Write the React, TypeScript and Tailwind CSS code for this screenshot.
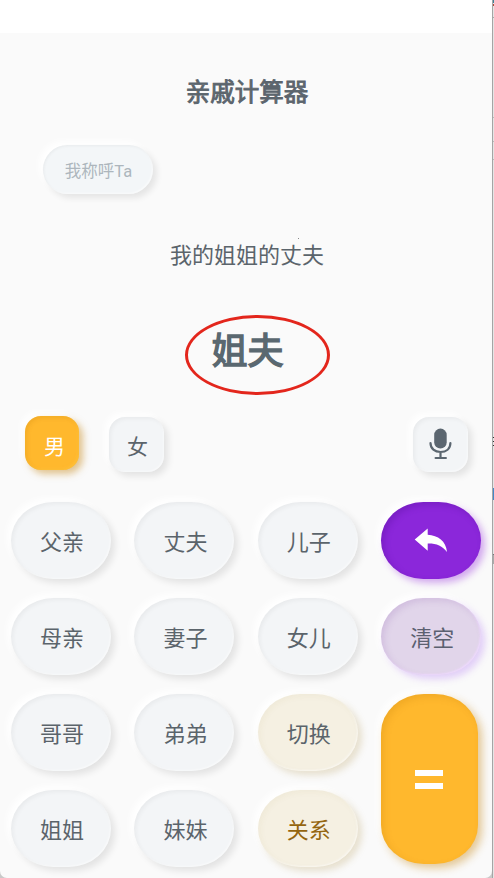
import type { ReactNode } from "react";

const soft = "bg-[#f3f5f7] text-[#5b646b] shadow-[4px_4px_7px_#00000018,-4px_-4px_7px_#ffffff,inset_2px_2px_4px_#0000000b,inset_-1px_-1px_2px_#ffffff80]";
const cream = "bg-[#f5f0e2] shadow-[4px_4px_7px_#a5843038,-4px_-4px_7px_#ffffff,inset_2px_2px_6px_#8070300d,inset_-1px_-1px_2px_#ffffff90]";

function Key({ children, tone = soft }: { children: ReactNode; tone?: string }) {
  return (
    <button className={`flex h-[77px] w-[100px] items-center justify-center rounded-[43px/39px] pb-[2px] pl-[2px] text-[22px] leading-[30px] ${tone}`}>
      {children}
    </button>
  );
}

export default function App() {
  return (
    <div className="flex h-[878px] w-[494px] overflow-hidden bg-[#c9c9c9] font-['Noto_Sans_CJK_SC',sans-serif] text-[#5b646b]">
      <main className="relative flex h-[878px] w-[492px] shrink-0 flex-col overflow-hidden rounded-b-[7px] bg-[#fafafa]">
        <div className="h-[33px] shrink-0 bg-white" />
        <h1 className="mt-[39px] pl-[2px] text-center text-[24.5px] leading-[38px] text-[#5c656d] [-webkit-text-stroke:0.9px_#5c656d]">亲戚计算器</h1>
        <div className="mt-[35px] ml-[43px] flex h-[49px] w-[110px] shrink-0 items-center justify-center rounded-[25px] bg-[#f3f6f8] pt-[4px] pl-px text-[16.5px] text-[#adb6bd] shadow-[4px_4px_6px_#00000016,-4px_-4px_7px_#ffffff,inset_1px_1px_3px_#0000000c,inset_-1px_-1px_2px_#ffffffa0]">
          <span>我称呼<span className="font-[Roboto]">Ta</span></span>
        </div>
        <p className="relative mt-[43px] pl-[2px] text-center text-[22px] leading-[32px]">
          我的姐姐的丈夫
          <i className="absolute top-px left-[298px] size-px bg-[#888]" />
        </p>
        <div className="mt-[46px] ml-[185px] flex h-[80px] w-[145px] shrink-0 items-center rounded-[50%] border-[3px] border-[#e3261c] pl-[23.5px] pb-[15px] text-[36px] leading-[50px] text-[#5a6870] [-webkit-text-stroke:1.5px_#5a6870]">姐夫</div>
        <div className="mt-[21px] flex h-[56px] shrink-0 items-start pl-[25px]">
          <button className="flex size-[54px] items-center justify-center rounded-[16px] bg-[#ffb82d] pt-[5px] pl-[5px] text-[21px] text-white shadow-[4px_4px_7px_#c98e2480,-4px_-4px_7px_#ffffff,inset_2px_2px_4px_#b26f0028,inset_-1px_-1px_3px_#ffcd4880]">男</button>
          <button className={`mt-px ml-[30px] flex size-[55px] items-center justify-center rounded-[16px] pt-[2px] pl-[2px] text-[21px] ${soft}`}>女</button>
          <button aria-label="语音" className={`mt-px ml-[249px] flex size-[55px] items-center justify-center rounded-[16px] pr-[2px] pb-px ${soft}`}>
            <svg width="24" height="34" viewBox="0 0 24 34" fill="none">
              <rect x="6.2" y="1.6" width="12.5" height="20" rx="6.25" fill="#5b6670" />
              <path d="M2.5 16C2.5 21.8 6.9 25 12.5 25S22.4 21.8 22.4 16M12.5 25.2v5.6M7.6 31h10.3" stroke="#5b6670" strokeWidth="2.2" strokeLinecap="round" />
            </svg>
          </button>
        </div>
        <div className="mt-[30px] grid grid-cols-[repeat(4,100px)] grid-rows-[repeat(4,77px)] gap-x-[23.4px] gap-y-[19px] pl-[11px]">
          <Key>父亲</Key>
          <Key>丈夫</Key>
          <Key>儿子</Key>
          <button aria-label="撤销" className="flex items-center justify-center rounded-[43px/39px] bg-[#8b27da] pr-px shadow-[4px_4px_7px_#a040e070,-4px_-4px_7px_#ffffff,inset_3px_3px_6px_#58109a55]">
            <svg width="34" height="25" viewBox="0 0 34 25" fill="white"><path d="M.7 11.5 13.7.5v6.3C24 7.5 32 13 33 24 28.5 17.5 22 15.2 13.7 15.4v7.3Z" /></svg>
          </button>
          <Key>母亲</Key>
          <Key>妻子</Key>
          <Key>女儿</Key>
          <Key tone="bg-[#e1d5ea] text-[#5b6070] shadow-[4px_4px_7px_#a868f04c,-4px_-4px_7px_#ffffff,inset_3px_3px_6px_#9060b030,inset_-1px_-1px_2px_#f0dcff]">清空</Key>
          <Key>哥哥</Key>
          <Key>弟弟</Key>
          <Key tone={`${cream} text-[#5b646b]`}>切换</Key>
          <button aria-label="等于" className="row-span-2 flex h-[170px] w-[97px] flex-col items-center justify-center gap-[7px] rounded-[43px/39px] bg-[#ffb82d] pr-px shadow-[4px_4px_8px_#c98e2478,-4px_-4px_7px_#ffffff,inset_3px_3px_7px_#b26f0030]">
            <span className="h-[6px] w-[28px] bg-white" />
            <span className="h-[6px] w-[28px] bg-white" />
          </button>
          <Key>姐姐</Key>
          <Key>妹妹</Key>
          <Key tone={`${cream} text-[#94650f]`}>关系</Key>
        </div>
      </main>
      <aside className="flex h-[878px] w-[2px] shrink-0 flex-col border-l border-[#a5a5a5] bg-[#e5e5e5]">
        <i className="h-[3px] bg-[#3d8298]" />
        <i className="mt-px h-[2px] bg-[#b04a3a]" />
        <i className="mt-[11px] h-px bg-[#aaa]" />
        <i className="mt-[99px] h-px bg-[#bbb]" />
        <i className="mt-[23px] h-px bg-[#bbb]" />
        <i className="mt-[17px] h-px bg-[#bbb]" />
        <i className="mt-[277px] h-px bg-[#333]" />
        <i className="mt-[3px] h-px bg-[#333]" />
        <i className="mt-[3px] h-px bg-[#333]" />
        <i className="mt-[42px] h-[12px] bg-[#4488c8]" />
        <i className="mt-[54px] h-px bg-[#777]" />
        <i className="h-[9px] bg-[#aaa]" />
      </aside>
    </div>
  );
}
